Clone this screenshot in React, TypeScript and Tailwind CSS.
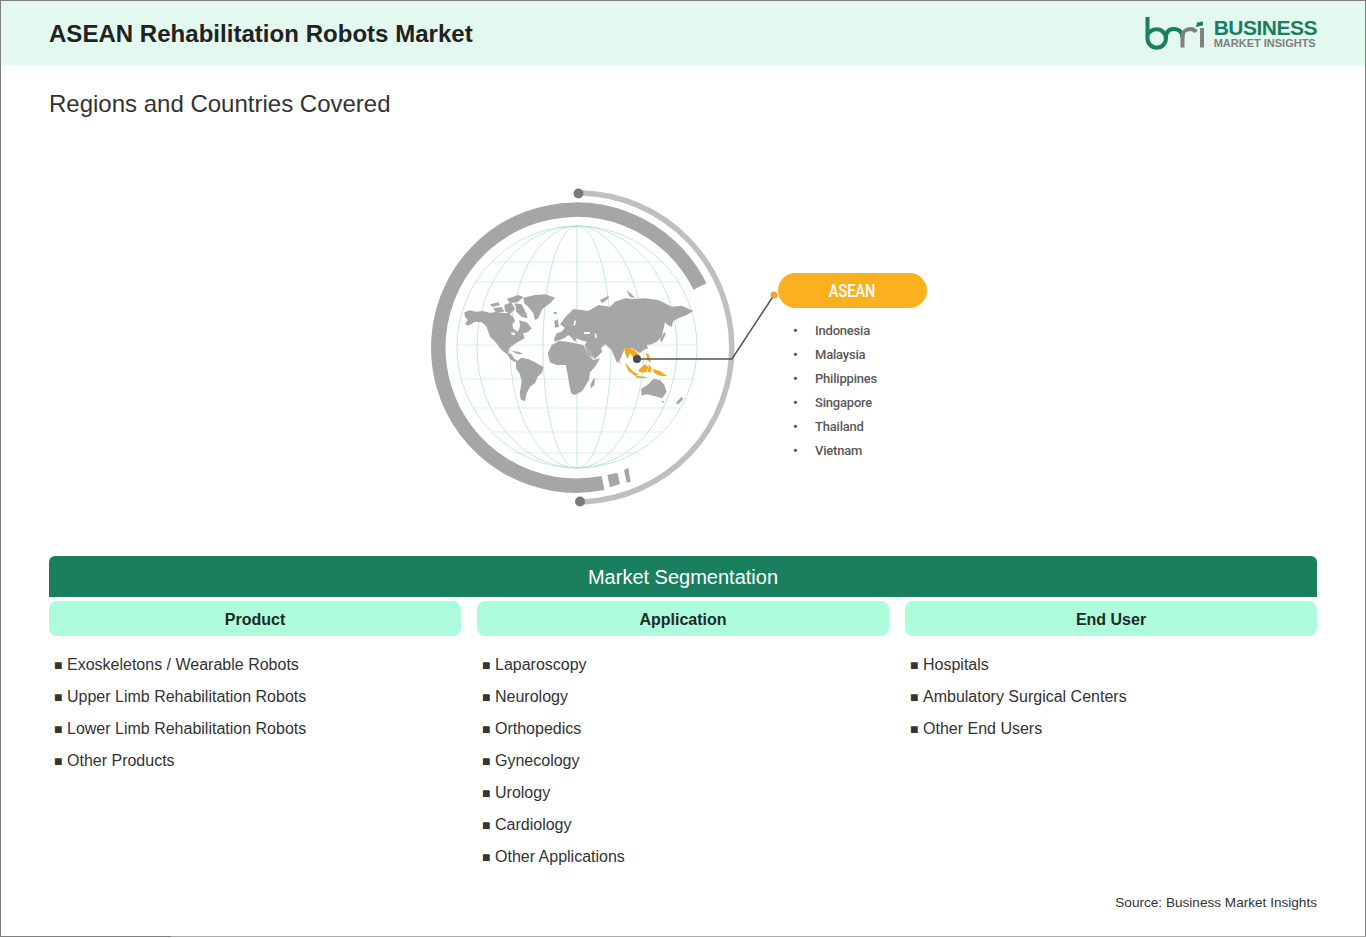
const products = ['Exoskeletons / Wearable Robots', 'Upper Limb Rehabilitation Robots', 'Lower Limb Rehabilitation Robots', 'Other Products']
const applications = ['Laparoscopy', 'Neurology', 'Orthopedics', 'Gynecology', 'Urology', 'Cardiology', 'Other Applications']
const endUsers = ['Hospitals', 'Ambulatory Surgical Centers', 'Other End Users']
const countries = ['Indonesia', 'Malaysia', 'Philippines', 'Singapore', 'Thailand', 'Vietnam']

const columns = [
  { title: 'Product', items: products },
  { title: 'Application', items: applications },
  { title: 'End User', items: endUsers },
]

function Logo() {
  return (
    <svg width="62" height="36" viewBox="0 0 62 36" className="shrink-0">
      <path d="M3.5 2 V23.5 A9.2 9.2 0 1 0 12.7 14.3 C9 14.3 5.5 16 3.5 20" fill="none" stroke="#1a7f5f" strokeWidth="4" />
      <path d="M21.8 24 C21.8 17 25 14 29.5 14 C35 14 38.5 17 38.5 23" fill="none" stroke="#1a7f5f" strokeWidth="4" />
      <path d="M38.5 32.5 V22 C38.5 17 42 14 46 14 C49 14 51 15 52 17" fill="none" stroke="#808080" strokeWidth="4" />
      <path d="M53 7.5 L59 6.5 V10.5 L56 11 L52 12 Z" fill="#1a7f5f" />
      <rect x="56" y="13" width="4" height="19.5" fill="#808080" />
    </svg>
  )
}

function Globe() {
  const meridians = [34, 67, 100, 120]
  const parallels = [
    [262, 85],
    [282, 103],
    [345, 120],
    [379, 118],
    [408, 103],
    [432, 85],
    [453, 63],
  ]
  return (
    <svg width="358" height="330" viewBox="420 180 358 330" className="shrink-0">
      {/* outer rings */}
      <path d="M700 286.5 A138 138 0 1 0 603 483" fill="none" stroke="#a6a6a6" strokeWidth="14.5" />
      <path d="M607.3 475 L617.3 472.7 L620 484 L610 487.3 Z" fill="#a6a6a6" />
      <path d="M624 470 L628.3 468 L630.7 481.7 L626.7 482.7 Z" fill="#a6a6a6" />
      <path d="M583 193 A154.5 154.5 0 0 1 585 501.7" fill="none" stroke="#bfbfbf" strokeWidth="5.5" />
      <path d="M578 193 H584" stroke="#bfbfbf" strokeWidth="5.5" />
      <path d="M580 501.7 H586" stroke="#bfbfbf" strokeWidth="5.5" />
      <circle cx="578.5" cy="193.5" r="5" fill="#7a7a7a" />
      <circle cx="580" cy="501.5" r="5" fill="#7a7a7a" />

      {/* globe grid */}
      <g fill="none" stroke="#a6dcd9" strokeWidth="0.7">
        <line x1="577" x2="577" y1="226" y2="468" />
        {meridians.map((rx) => (
          <ellipse key={rx} cx="577" cy="347" rx={rx} ry="121" />
        ))}
      </g>
      <g fill="none" stroke="#c5e9e6" strokeWidth="0.7">
        {parallels.map(([y, half]) => (
          <line key={y} x1={577 - half} x2={577 + half} y1={y} y2={y} />
        ))}
      </g>

      {/* americas and greenland, traced at 3x */}
      <g transform="translate(455 285) scale(0.3333)" fill="#a6a6a6">
        <path d="M28 82 L45 76 L62 80 L85 78 L105 84 L125 80 L145 84 L160 84 L175 96 L180 108 L172 118 L174 130 L188 140 L195 125 L193 106 L215 112 L230 130 L218 142 L205 145 L208 160 L190 170 L178 178 L162 190 L160 210 L148 202 L135 190 L122 172 L105 155 L95 125 L80 112 L60 110 L40 122 L30 118 L38 105 L30 95 Z" />
        <path d="M105 58 L130 52 L135 60 L112 66 Z M115 70 L140 66 L148 80 L122 82 Z M148 60 L168 52 L180 72 L165 88 L150 78 Z M155 42 L190 30 L205 36 L188 52 L165 54 Z M180 55 L200 58 L214 85 L218 100 L200 96 L184 80 Z" />
        <path d="M205 38 L240 30 L272 28 L300 38 L285 55 L262 72 L250 100 L240 105 L235 85 L222 68 L208 55 Z" />
        <path d="M155 205 L170 208 L178 222 L190 228 L180 232 L165 222 Z M170 198 L192 200 L205 208 L185 206 Z" />
        <path d="M183 232 L198 218 L220 222 L240 232 L265 245 L262 262 L248 275 L240 295 L225 305 L215 325 L210 348 L198 345 L194 325 L200 290 L195 268 L183 250 Z" />
        <path d="M296 82 L304 80 L306 86 L298 88 Z" />
        <path d="M168 142 L182 144 L178 151 L170 149 Z" fill="#ffffff" />
      </g>

      {/* africa, eurasia, oceania */}
      <g transform="translate(545 285) scale(0.3333)" fill="#a6a6a6">
        <path d="M8 205 L20 180 L42 168 L70 170 L90 175 L115 180 L130 210 L145 225 L165 220 L150 245 L135 262 L132 285 L112 318 L90 330 L78 325 L72 295 L68 268 L62 240 L35 240 L15 232 Z" />
        <path d="M145 282 L150 280 L148 300 L138 310 L136 300 Z" />
        <path d="M28 160 L35 145 L50 140 L60 128 L45 118 L62 95 L85 72 L110 75 L130 78 L160 60 L195 65 L210 50 L240 40 L265 42 L300 40 L340 45 L380 65 L410 62 L445 78 L425 90 L400 100 L385 108 L375 125 L360 112 L355 135 L350 155 L335 170 L320 178 L305 180 L310 190 L295 195 L285 205 L262 190 L240 190 L222 232 L215 232 L200 195 L180 178 L168 190 L172 200 L150 222 L130 210 L118 182 L125 170 L105 165 L95 160 L90 172 L80 158 L70 150 L60 158 L45 165 L28 170 Z" />
        <path d="M28 108 L38 102 L42 125 L30 128 Z M165 45 L190 33 L192 38 L172 55 Z M243 14 L260 28 L270 40 L255 35 Z M345 165 L358 140 L362 148 L350 172 Z M375 115 L385 105 L380 128 Z M222 232 L226 232 L226 238 Z" />
        <path d="M288 312 L310 298 L325 282 L345 285 L358 300 L365 320 L352 340 L325 332 L305 328 L290 332 Z M350 348 L358 348 L354 354 Z M392 355 L410 335 L415 342 L400 358 Z" />
        <path d="M116 142 L134 141 L136 147 L118 147 Z M149 145 L154 146 L155 160 L150 158 Z M88 108 L93 106 L91 120 L85 122 Z" fill="#ffffff" />
        <path d="M115 176 L148 220" fill="none" stroke="#ffffff" strokeWidth="1" />
      </g>
      <g transform="translate(545 285) scale(0.3333)" fill="#f3a81f">
        <path d="M238 190 L252 188 L268 195 L285 212 L275 232 L265 228 L262 212 L255 205 L248 222 L240 205 Z" />
        <path d="M240 232 L262 258 L282 270 L270 272 L250 258 Z" />
        <path d="M280 255 L300 238 L310 245 L305 262 L285 262 Z" />
        <path d="M270 272 L310 276 L295 280 L275 278 Z" />
        <path d="M312 238 L320 250 L318 262 L308 260 Z" />
        <path d="M303 205 L310 205 L318 232 L308 228 Z" />
        <path d="M322 252 L345 258 L368 274 L345 272 L328 265 Z" />
      </g>

      {/* leader */}
      <path d="M637 359 H732 L774 295" fill="none" stroke="#555555" strokeWidth="1.5" />
      <circle cx="637" cy="359" r="4" fill="#4a4a55" />
      <circle cx="774" cy="295" r="3.5" fill="#f0a030" />
    </svg>
  )
}

export default function App() {
  return (
    <div className="relative w-[1366px] h-[937px] bg-white border border-[#7f7f7f] border-b-[#aaaaaa] font-['Liberation_Sans',Arial,sans-serif] text-[#222222]">
      <div className="h-[64px] bg-[#e3f8ef] flex items-center justify-between pl-[48px] pr-[48px]">
        <h1 className="pt-[2px] text-[24px] font-bold text-[#222222] tracking-[0.03px]">ASEAN Rehabilitation Robots Market</h1>
        <div className="flex items-center gap-[8px]">
          <Logo />
          <div className="flex flex-col pt-[2px]">
            <span className="text-[21px] leading-[20px] font-bold text-[#1a7f5f] tracking-[-0.5px]">BUSINESS</span>
            <span className="-mt-[1px] text-[11px] leading-[13px] font-bold text-[#808080]">MARKET INSIGHTS</span>
          </div>
        </div>
      </div>

      <h2 className="mt-[25px] ml-[48px] text-[24px] leading-[28px] font-normal text-[#333333]">Regions and Countries Covered</h2>

      <div className="mt-[62px] flex pl-[419px] h-[376px]">
        <Globe />
        <div className="mt-[93px] w-[149px]">
          <div className="h-[35px] pt-[1px] rounded-full bg-[#fbb01f] flex items-center justify-center text-white text-[17.5px] font-medium font-['Roboto',sans-serif]">
            <span className="inline-block scale-x-[0.83]">ASEAN</span>
          </div>
          <ul className="mt-[11px] pl-[15px]">
            {countries.map((c) => (
              <li key={c} className="h-[24px] flex items-center text-[13px] font-medium text-[#595959] tracking-[-0.2px] font-['Roboto',sans-serif]">
                <span className="w-[22px] text-[14px]">•</span>
                {c}
              </li>
            ))}
          </ul>
        </div>
      </div>

      <div className="mx-[48px]">
        <div className="h-[41px] bg-[#1a7f5f] rounded-t-[6px] flex items-center justify-center text-white text-[20px]">Market Segmentation</div>
        <div className="mt-[4px] grid grid-cols-3 gap-[16px]">
          {columns.map((col) => (
            <div key={col.title}>
              <div className="h-[35px] pt-[2px] rounded-[8px] bg-[#adfcdc] flex items-center justify-center text-[16px] font-bold text-[#1d2b26]">{col.title}</div>
              <ul className="mt-[13px] pl-[5px]">
                {col.items.map((item) => (
                  <li key={item} className="h-[32px] flex items-center text-[16px] text-[#333333]">
                    <span className="w-[13px] text-[14px] text-[#333333]">■</span>
                    {item}
                  </li>
                ))}
              </ul>
            </div>
          ))}
        </div>
      </div>
      <div className="absolute top-[892px] right-[48px] text-[13.6px] text-[#333333]">Source: Business Market Insights</div>
      <div className="absolute -bottom-[1px] -left-[1px] w-[171px] h-[1px] bg-[#7f7f7f]" />
    </div>
  )
}
